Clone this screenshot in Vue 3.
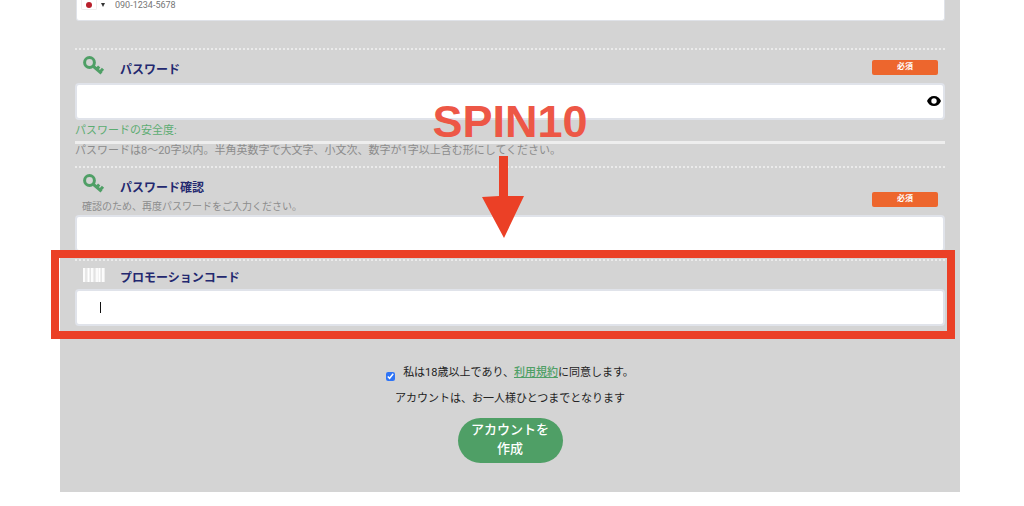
<template>
  <form class="signup" @submit.prevent="handleSubmit">
    <div class="phone-box">
      <button type="button" class="country-btn" aria-label="日本">
        <span class="flag"></span>
        <span class="caret"></span>
      </button>
      <input v-model="phone" class="phone-input" type="tel" placeholder="090-1234-5678" aria-label="電話番号" />
    </div>

    <section class="group password-group">
      <div class="group-head">
        <svg class="key-icon" width="22" height="20" viewBox="0 0 22 20" fill="none" stroke="currentColor">
          <circle cx="6.5" cy="7.5" r="4.900" stroke-width="3"></circle>
          <path d="M10 11l8.500 7.300M13.800 14.300l2.400-2.800M17 17l3-3.200" stroke-width="3"></path>
        </svg>
        <label for="password" class="group-label">パスワード</label>
        <span class="badge">必須</span>
      </div>
      <div class="input-wrap">
        <input id="password" v-model="password" class="field" :type="showPassword ? 'text' : 'password'" />
        <button type="button" class="eye-btn" aria-label="表示" @click="showPassword = !showPassword">
          <svg width="14" height="10" viewBox="0 0 14 10">
            <path d="M7 0C3.8 0 1.1 2 0 5c1.1 3 3.8 5 7 5s5.900-2 7-5c-1.100-3-3.800-5-7-5z" fill="#000"></path>
            <circle cx="7" cy="5" r="2.700" fill="#fff"></circle>
          </svg>
        </button>
      </div>
      <p class="strength">パスワードの安全度:</p>
      <div class="strength-bar"></div>
      <p class="hint">パスワードは8〜20字以内。半角英数字で大文字、小文次、数字が1字以上含む形にしてください。</p>
    </section>

    <section class="group confirm-group">
      <div class="group-head">
        <svg class="key-icon" width="22" height="20" viewBox="0 0 22 20" fill="none" stroke="currentColor">
          <circle cx="6.5" cy="7.5" r="4.900" stroke-width="3"></circle>
          <path d="M10 11l8.500 7.300M13.800 14.300l2.400-2.800M17 17l3-3.200" stroke-width="3"></path>
        </svg>
        <label for="confirm" class="group-label">パスワード確認</label>
      </div>
      <div class="confirm-note">
        <span>確認のため、再度パスワードをご入力ください。</span>
        <span class="badge">必須</span>
      </div>
      <input id="confirm" v-model="confirm" class="field" type="password" />
    </section>

    <section class="group promo-group">
      <div class="group-head">
        <svg class="barcode-icon" width="22" height="14" viewBox="0 0 22 14">
          <rect width="22" height="14" fill="#ececec"></rect>
          <path d="M1 0v14M5.500 0v14M9 0v14M14 0v14M16.500 0v14M20 0v14" stroke="#fff" stroke-width="1.600"></path>
          <path d="M3 0v14M7.500 0v14M11.500 0v14M18.300 0v14" stroke="#dedede" stroke-width="0.600"></path>
        </svg>
        <label for="promo" class="group-label">プロモーションコード</label>
      </div>
      <div class="input-wrap">
        <input id="promo" v-model="promo" class="field" type="text" />
        <span class="cursor"></span>
      </div>
      <div class="highlight"></div>
    </section>

    <div class="agree">
      <input id="agree" v-model="agreed" type="checkbox" />
      <p><label for="agree">私は18歳以上であり、</label><a href="#">利用規約</a>に同意します。</p>
    </div>
    <p class="single-account">アカウントは、お一人様ひとつまでとなります</p>
    <button type="submit" class="submit-btn">アカウントを<br />作成</button>

    <div class="callout">
      <span class="callout-code">SPIN10</span>
      <svg class="callout-arrow" width="42" height="82" viewBox="0 0 42 82">
        <path d="M17 0h9v40h16L22 82 0 41l17-1z" fill="#eb4026"></path>
      </svg>
    </div>
  </form>
</template>

<script setup>
import { ref } from 'vue'

const phone = ref('')
const password = ref('')
const confirm = ref('')
const promo = ref('')
const agreed = ref(true)
const showPassword = ref(false)

function handleSubmit() {
  if (!agreed.value || password.value !== confirm.value) {
    return
  }
}
</script>

<style>
body {
  margin: 0;
  background: #fff;
}
</style>

<style scoped>
.signup {
  position: relative;
  box-sizing: border-box;
  margin: 0 64px 0 60px;
  padding: 0 15px 29px;
  background: #d4d4d4;
  color: #222;
  font-family: Roboto, "Noto Sans CJK JP", sans-serif;
  font-size: 11px;
  line-height: 16px;
}

.signup p {
  margin: 0;
}

.signup input,
.signup button {
  font-family: inherit;
}

.phone-box {
  display: flex;
  align-items: flex-start;
  box-sizing: border-box;
  height: 21px;
  margin: 0 0 27px 1px;
  border: 1px solid #dfe2e8;
  border-top: none;
  border-radius: 0 0 3px 3px;
  background: #fff;
}

.country-btn {
  display: flex;
  align-items: center;
  gap: 8px;
  height: 10px;
  padding: 0 0 0 4px;
  border: none;
  background: none;
}

.flag {
  display: flex;
  align-items: center;
  justify-content: center;
  box-sizing: border-box;
  width: 16px;
  height: 10px;
  border: 1px solid #eee;
  border-top: none;
  border-radius: 0 0 2px 2px;
}

.flag::before {
  content: "";
  width: 6px;
  height: 6px;
  border-radius: 50%;
  background: #b8202c;
}

.caret {
  margin-left: -4px;
  border: 2px solid transparent;
  border-top: 4px solid #333;
  border-bottom: none;
}

.phone-input {
  flex: 1;
  height: 9px;
  margin-left: 10px;
  padding: 0;
  border: none;
  outline: none;
  background: transparent;
  font-size: 9px;
  line-height: 9px;
}

.phone-input::placeholder {
  color: #757575;
}

.group {
  position: relative;
  border-top: 2px dotted #ebebeb;
}

.group-head {
  display: flex;
  align-items: flex-start;
  padding: 5px 7px 0 8px;
}

.key-icon {
  color: #4f9f66;
}

.group-label {
  margin: 7px 0 0 15px;
  color: #23286f;
  font-size: 12px;
  font-weight: 700;
}

.badge {
  box-sizing: border-box;
  width: 66px;
  height: 15px;
  margin: 5px 0 0 auto;
  border-radius: 2px;
  background: #ed662d;
  color: #fff;
  font-size: 8px;
  font-weight: 700;
  line-height: 13px;
  text-align: center;
}

.input-wrap {
  position: relative;
}

.field {
  display: block;
  box-sizing: border-box;
  width: 100%;
  height: 37px;
  padding: 0 24px;
  border: 2px solid #e0e3ea;
  border-radius: 4px;
  outline: none;
  background: #fff;
  font-size: 12px;
}

.eye-btn {
  position: absolute;
  top: 13px;
  right: 4px;
  display: flex;
  padding: 0;
  border: none;
  background: none;
  cursor: pointer;
}

.password-group {
  padding-bottom: 7px;
}

.password-group .group-head {
  padding-bottom: 5px;
}

.strength {
  color: #5cac72;
}

.signup .strength {
  padding-top: 2px;
  margin-top: 1px;
}

.strength-bar {
  height: 3px;
  margin-top: 2px;
  background: #eee;
}

.signup .hint {
  margin-top: -1px;
  color: #8c8c8c;
}

.confirm-note {
  display: flex;
  align-items: flex-start;
  height: 19px;
  padding: 0 7px;
  color: #8c8c8c;
  font-size: 10px;
}

.confirm-note span:first-child {
  padding-top: 3px;
}

.confirm-note .badge {
  margin-top: -4px;
}

.confirm-group {
  padding-bottom: 7px;
}

.barcode-icon {
  display: block;
  margin-top: 2px;
}

.promo-group .group-head {
  padding-bottom: 3px;
}

.promo-group .group-label {
  margin-top: 4px;
}

.cursor {
  position: absolute;
  top: 13px;
  left: 25px;
  width: 1px;
  height: 11px;
  background: #111;
}

.highlight {
  position: absolute;
  top: -11px;
  right: -10px;
  bottom: -13px;
  left: -24px;
  border: 8px solid #eb4026;
  pointer-events: none;
}

.agree {
  display: flex;
  align-items: flex-start;
  justify-content: center;
  gap: 8px;
  margin-top: 39px;
}

.agree input {
  width: 9px;
  height: 9px;
  margin: 7px 0 0;
  accent-color: #2f74f5;
}

.agree a {
  color: #4f9f66;
  font-weight: 500;
}

.signup .single-account {
  margin-top: 10px;
  text-align: center;
}

.submit-btn {
  display: block;
  width: 105px;
  margin: 11px auto 0;
  padding: 2px 10px 5px;
  border: none;
  border-radius: 23px;
  background: #4f9f66;
  color: #fff;
  font-size: 13px;
  font-weight: 500;
  line-height: 19px;
  cursor: pointer;
}

.callout {
  position: absolute;
  top: 96px;
  left: 0;
  right: 0;
  display: flex;
  flex-direction: column;
  align-items: center;
  pointer-events: none;
}

.callout-code {
  color: #ed5746;
  font-family: "Liberation Sans", Arial, sans-serif;
  font-size: 45px;
  font-weight: 700;
  line-height: 52px;
}

.callout-arrow {
  margin: 8px 14px 0 0;
}
</style>
